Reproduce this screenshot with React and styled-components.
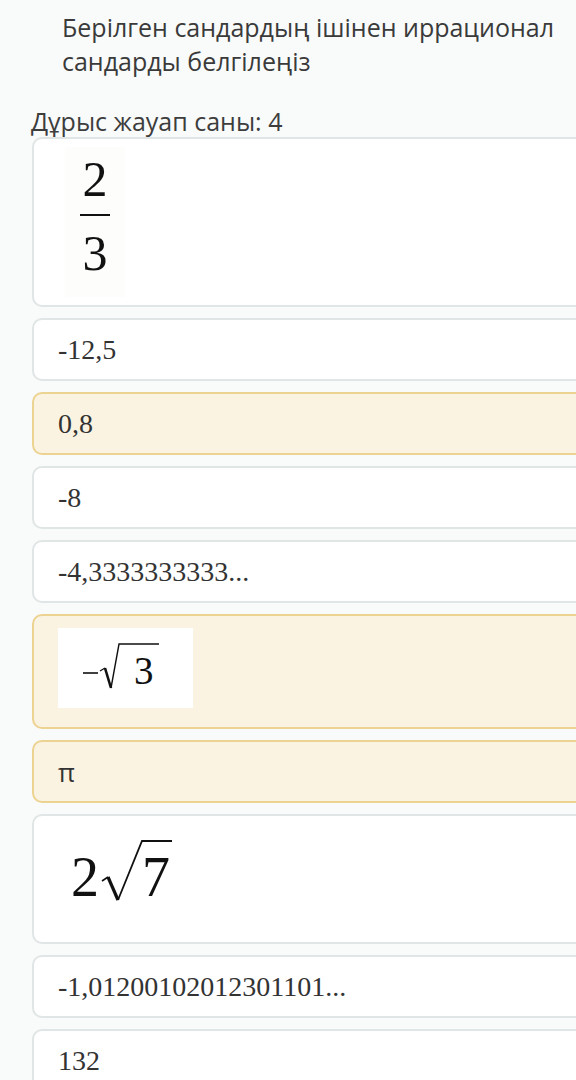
import React from "react";
import styled, { createGlobalStyle } from "styled-components";

const GlobalStyle = createGlobalStyle`
  body {
    margin: 0;
    background-color: #f9fafa;
    overflow: hidden;
  }
`;

const options = [
  { id: 1, kind: "fraction", h: 170, pt: 8 },
  { id: 2, text: "-12,5" },
  { id: 3, text: "0,8", selected: true },
  { id: 4, text: "-8" },
  { id: 5, text: "-4,3333333333..." },
  { id: 6, kind: "negSqrt3", h: 115, pt: 12, selected: true },
  { id: 7, text: "π", sans: true, selected: true },
  { id: 8, kind: "twoSqrt7", h: 130, pt: 5 },
  { id: 9, text: "-1,01200102012301101..." },
  { id: 10, text: "132" },
];

const Fraction = () => (
  <StFraction>
    <StDigit>2</StDigit>
    <StBar />
    <StDigit $bottom>3</StDigit>
  </StFraction>
);

const NegSqrt3 = () => (
  <StMathImage width="135" height="80" viewBox="0 0 135 80">
    <rect width="135" height="80" fill="#ffffff" />
    <line x1="25" y1="45" x2="40" y2="45" stroke="#111" strokeWidth="1.6" />
    <path d="M42 43 L47 40" fill="none" stroke="#111" strokeWidth="1.2" />
    <path d="M47 40 L53 60" fill="none" stroke="#111" strokeWidth="2.6" />
    <path d="M53 60 L61 16 L101 16" fill="none" stroke="#111" strokeWidth="1.4" />
    <text x="76" y="56" fontSize="39" fontFamily="Liberation Serif, serif" fill="#111">
      3
    </text>
  </StMathImage>
);

const TwoSqrt7 = () => (
  <StMathImage width="130" height="92" viewBox="0 0 130 92">
    <text x="13" y="75" fontSize="56" fontFamily="Liberation Serif, serif" fill="#111">
      2
    </text>
    <path d="M44 60 L50 56" fill="none" stroke="#111" strokeWidth="1.6" />
    <path d="M50 56 L60 79" fill="none" stroke="#111" strokeWidth="3.2" />
    <path d="M60 79 L84 20 L114 20" fill="none" stroke="#111" strokeWidth="1.8" />
    <text x="84" y="75" fontSize="56" fontFamily="Liberation Serif, serif" fill="#111">
      7
    </text>
  </StMathImage>
);

const App = () => {
  const renderContent = (item) => {
    if (item.kind === "fraction") return <Fraction />;
    if (item.kind === "negSqrt3") return <NegSqrt3 />;
    if (item.kind === "twoSqrt7") return <TwoSqrt7 />;
    return <StOptionText $sans={item.sans}>{item.text}</StOptionText>;
  };

  return (
    <>
      <GlobalStyle />
      <StPage>
        <StQuestion>
          Берілген сандардың ішінен иррационал
          <br />
          сандарды белгілеңіз
        </StQuestion>
        <StCount>Дұрыс жауап саны: 4</StCount>
        <StList>
          {options.map((item) => (
            <StOption
              key={item.id}
              $selected={item.selected}
              $h={item.h}
              $pt={item.pt}
            >
              {renderContent(item)}
            </StOption>
          ))}
        </StList>
      </StPage>
    </>
  );
};

const StPage = styled.div`
  display: flex;
  flex-direction: column;
  padding-top: 10px;
  font-family: "Open Sans", "Noto Sans", sans-serif;
`;

const StQuestion = styled.div`
  padding-left: 62px;
  font-size: 25px;
  line-height: 34px;
  color: #3a3a3a;
`;

const StCount = styled.div`
  margin-top: 28px;
  padding-left: 31px;
  font-size: 25px;
  line-height: 30px;
  color: #3d3d3d;
`;

const StList = styled.div`
  display: flex;
  flex-direction: column;
  gap: 11px;
  margin-top: 1px;
  padding-left: 32px;
`;

const StOption = styled.div`
  box-sizing: border-box;
  width: 570px;
  flex-shrink: 0;
  height: ${(props) => props.$h || 63}px;
  padding: ${(props) => (props.$pt ? `${props.$pt}px 24px 0` : "0 24px")};
  display: flex;
  align-items: ${(props) => (props.$pt ? "flex-start" : "center")};
  border: 2px solid ${(props) => (props.$selected ? "#ecd392" : "#e0e5e5")};
  border-radius: 10px;
  background-color: ${(props) => (props.$selected ? "#fbf3e1" : "#ffffff")};
`;

const StOptionText = styled.span`
  font-family: ${(props) =>
    props.$sans ? `"Open Sans", sans-serif` : `"Liberation Serif", serif`};
  font-size: ${(props) => (props.$sans ? "26px" : "28px")};
  line-height: 1;
  color: #333333;
`;

const StFraction = styled.div`
  width: 60px;
  height: 150px;
  margin-left: 7px;
  display: flex;
  flex-direction: column;
  align-items: center;
  background-color: #fdfdfc;
`;

const StDigit = styled.div`
  margin-top: ${(props) => (props.$bottom ? "12px" : "7px")};
  font-family: "Liberation Serif", serif;
  font-size: 50px;
  line-height: 50px;
  color: #111111;
`;

const StBar = styled.div`
  width: 30px;
  height: 2px;
  margin-top: 10px;
  background-color: #111111;
`;

const StMathImage = styled.svg`
  display: block;
`;

export default App;
